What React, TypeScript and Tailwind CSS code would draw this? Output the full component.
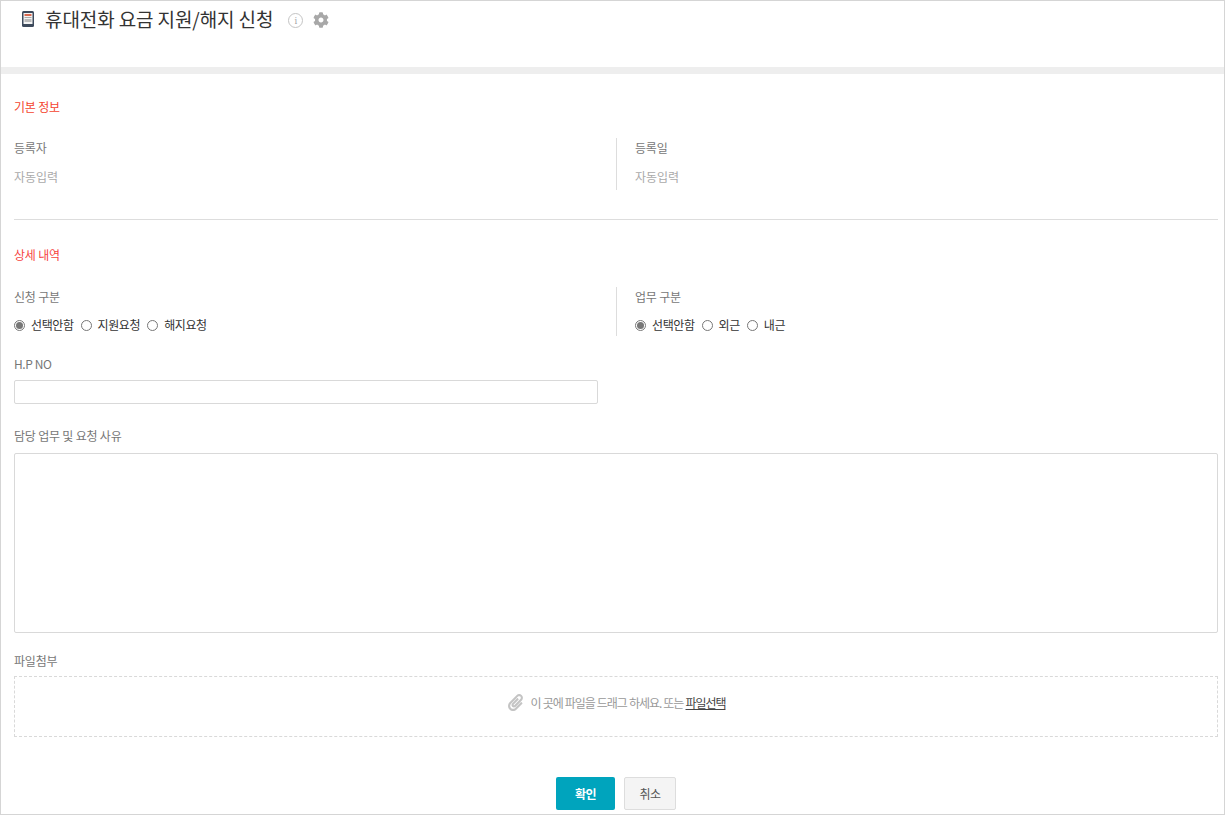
import { FaCog, FaPaperclip } from "react-icons/fa";

const font = { fontFamily: '"Noto Sans CJK KR", "Noto Sans", sans-serif' };

function Radio({ label, checked }: { label: string; checked?: boolean }) {
  return (
    <label className="flex items-center text-[12px] leading-[18px] tracking-[-0.4px] text-[#333]">
      <span className="mr-[6px] flex h-[11px] w-[11px] items-center justify-center rounded-full border border-[#777] bg-white">
        {checked && <span className="h-[7px] w-[7px] rounded-full bg-[#777]" />}
      </span>
      {label}
    </label>
  );
}

function RadioRow({ options }: { options: string[] }) {
  return (
    <div className="flex gap-[7px]">
      {options.map((o, i) => (
        <Radio key={o} label={o} checked={i === 0} />
      ))}
    </div>
  );
}

function FieldLabel({ children }: { children: string }) {
  return <div className="text-[12px] leading-[18px] tracking-[-0.2px] text-[#777]">{children}</div>;
}

export default function App() {
  return (
    <div style={font} className="h-[815px] w-[1225px] overflow-hidden border border-[#d5d5d5] bg-white">
      {/* Title */}
      <div className="flex h-[66px] items-start pl-[21px] pt-[6px]">
        <svg width="12" height="16" viewBox="0 0 12 16" className="mt-[4px]">
          <rect x="0" y="0" width="12" height="16" rx="1.5" fill="#3d4a5c" />
          <rect x="1.5" y="2" width="9" height="11" fill="#f4f4f4" />
          <rect x="2.5" y="3" width="7" height="2" fill="#d9694f" />
          <rect x="2.5" y="6" width="7" height="1" fill="#aaa" />
          <rect x="2.5" y="8" width="7" height="3" fill="#bbb" />
        </svg>
        <h1 className="ml-[11px] text-[19px] font-normal leading-[24px] tracking-[-0.1px] text-[#333]">
          휴대전화 요금 지원/해지 신청
        </h1>
        <span className="ml-[15px] mt-[6px] flex h-[15px] w-[15px] items-center justify-center rounded-full border border-[#c4c4c4] font-serif text-[10px] leading-none text-[#aaa]">
          i
        </span>
        <FaCog size={16} className="ml-[10px] mt-[5px] text-[#a8a8a8]" />
      </div>
      <div className="h-[7px] bg-[#eeeeee]" />

      <div className="pl-[13px] pr-[6px]">
        {/* Basic info */}
        <div className="pt-[24px] text-[12px] leading-[18px] tracking-[-0.2px] text-[#f4452f]">기본 정보</div>
        <div className="mt-[22px] grid grid-cols-[602px_1fr]">
          <div className="h-[52px] pt-px">
            <FieldLabel>등록자</FieldLabel>
            <div className="mt-[11px] text-[12px] leading-[18px] text-[#aaa]">자동입력</div>
          </div>
          <div className="h-[52px] border-l border-[#ddd] pl-[18px] pt-px">
            <FieldLabel>등록일</FieldLabel>
            <div className="mt-[11px] text-[12px] leading-[18px] text-[#aaa]">자동입력</div>
          </div>
        </div>
        <div className="mt-[29px] border-t border-[#ddd]" />

        {/* Details */}
        <div className="pt-[26px] text-[12px] leading-[18px] tracking-[-0.2px] text-[#f6453f]">상세 내역</div>
        <div className="mt-[23px] grid grid-cols-[602px_1fr]">
          <div className="h-[49px] pt-px">
            <FieldLabel>신청 구분</FieldLabel>
            <div className="mt-[10px]">
              <RadioRow options={["선택안함", "지원요청", "해지요청"]} />
            </div>
          </div>
          <div className="h-[49px] border-l border-[#ddd] pl-[18px] pt-px">
            <FieldLabel>업무 구분</FieldLabel>
            <div className="mt-[10px]">
              <RadioRow options={["선택안함", "외근", "내근"]} />
            </div>
          </div>
        </div>

        <div className="mt-[19px] text-[12px] leading-[18px] tracking-[-0.4px] text-[#777]">H.P NO</div>
        <input className="mt-[7px] block h-[24px] w-[584px] rounded-[2px] border border-[#d9d9d9] bg-white" />

        <div className="mt-[23px]">
          <FieldLabel>담당 업무 및 요청 사유</FieldLabel>
        </div>
        <textarea className="mt-[8px] block h-[180px] w-full resize-none rounded-[2px] border border-[#d9d9d9] bg-white" />

        <div className="mt-[19px]">
          <FieldLabel>파일첨부</FieldLabel>
        </div>
        <div className="mt-[6px] flex h-[61px] w-full items-center justify-center border border-dashed border-[#d9d9d9] pb-[8px] text-[12px] tracking-[-1.05px] text-[#999] [word-spacing:0.5px]">
          <FaPaperclip size={17} className="mr-[7px] text-[#c4c4c4]" />
          이 곳에 파일을 드래그 하세요. 또는&nbsp;
          <span className="text-[#444] underline">파일선택</span>
        </div>

        {/* Buttons */}
        <div className="mt-[40px] flex justify-center gap-[9px]">
          <button className="h-[33px] w-[59px] rounded-[2px] bg-[#00a4bd] text-[12px] font-bold tracking-[-0.5px] text-white">
            확인
          </button>
          <button className="h-[33px] w-[52px] rounded-[2px] border border-[#ddd] bg-[#f4f4f4] text-[12px] tracking-[-0.5px] text-[#555]">
            취소
          </button>
        </div>
      </div>
    </div>
  );
}
